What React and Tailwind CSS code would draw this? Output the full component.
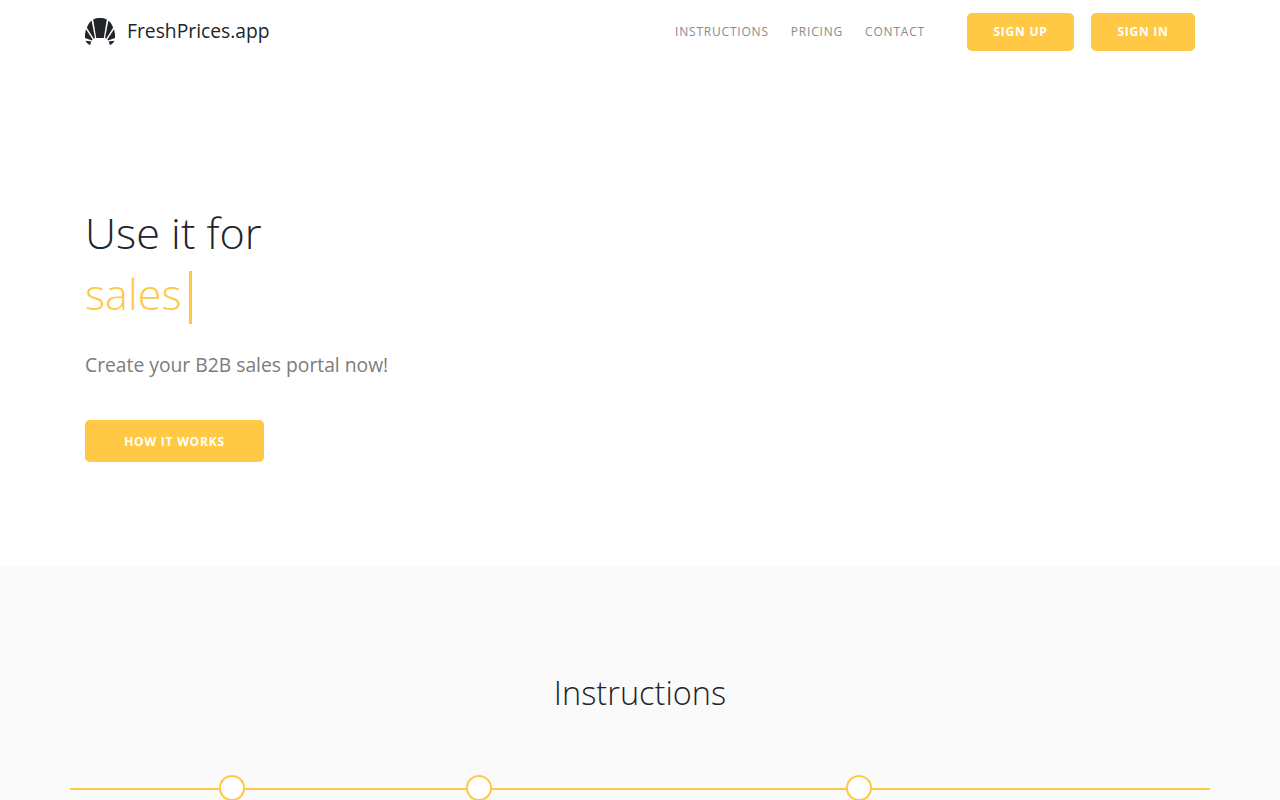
const font = { fontFamily: '"Open Sans", sans-serif' };

function Logo() {
  return (
    <svg width="30" height="27" viewBox="0 0 30 27" className="shrink-0">
      <g fill="#212529">
        <path d="M8.2 1.6 C10.2 .4 12.6 0 15 0 C17.4 0 19.8 .4 21.8 1.6 L18.8 20 L11.2 20 Z" />
        <path d="M6.6 2.4 L10 20 L8.6 20.6 L1.8 9.6 C2.8 6.8 4.4 4.2 6.6 2.4 Z" />
        <path d="M23.4 2.4 L20 20 L21.4 20.6 L28.2 9.6 C27.2 6.8 25.6 4.2 23.4 2.4 Z" />
        <path d="M1 11.2 L7.6 21.6 L7 22.4 L0 20 C-.1 16.8 .2 13.8 1 11.2 Z" />
        <path d="M29 11.2 L22.4 21.6 L23 22.4 L30 20 C30.1 16.8 29.8 13.8 29 11.2 Z" />
        <path d="M.6 22.8 L6.4 23.6 L5 27 C3 26.2 1.4 24.8 .6 22.8 Z" />
        <path d="M29.4 22.8 L23.6 23.6 L25 27 C27 26.2 28.6 24.8 29.4 22.8 Z" />
      </g>
    </svg>
  );
}

function NavButton({ children, width }) {
  return (
    <a className={`flex h-[38px] items-center justify-center rounded-[5px] bg-[#ffc845] text-[12px] font-bold tracking-[0.75px] text-white ${width}`}>
      {children}
    </a>
  );
}

function Dot() {
  return <span className="z-10 box-border block size-[26px] rounded-full border-2 border-[#ffc845] bg-white" />;
}

export default function App() {
  return (
    <div style={font} className="h-[800px] overflow-hidden bg-white text-[#212529] antialiased">
      <header className="flex h-[64px] items-center px-[85px]">
        <a className="-mt-[2px] flex items-center gap-3">
          <Logo />
          <span className="text-[19.3px] leading-none">FreshPrices.app</span>
        </a>
        <nav className="ml-auto flex items-center text-[12px] font-medium tracking-[0.8px] text-[#8a8a8a]">
          <a className="mr-[22px]">INSTRUCTIONS</a>
          <a className="mr-[22px]">PRICING</a>
          <a>CONTACT</a>
        </nav>
        <div className="ml-[42px] flex gap-[17px]">
          <NavButton width="w-[107px]">SIGN UP</NavButton>
          <NavButton width="w-[104px]">SIGN IN</NavButton>
        </div>
      </header>

      <section className="h-[502px] px-[85px] pt-[138px]">
        <h1 className="text-[43.2px] leading-[62px] font-light">Use it for</h1>
        <div className="flex h-[60px] items-center text-[43.2px] leading-[60px] font-light text-[#ffc845]">
          sales
          <span className="mt-[6px] ml-[7px] h-[53px] w-[3px] bg-[#ffc845]" />
        </div>
        <p className="mt-[26px] text-[19.3px] leading-[30px] text-[#7c7c7c]">Create your B2B sales portal now!</p>
        <a className="mt-[40px] flex h-[42px] w-[179px] items-center justify-center rounded-[5px] bg-[#ffc845] pt-[1px] text-[12px] font-bold tracking-[0.8px] text-white">
          HOW IT WORKS
        </a>
      </section>

      <section className="h-[234px] bg-[#fafafa]">
        <h2 className="pt-[102px] text-center text-[32.5px] leading-[50px] font-light">Instructions</h2>
        <div className="relative mx-[70px] mt-[57px] h-[26px]">
          <div className="absolute top-[13px] right-0 left-0 h-[2px] bg-[#ffc845]" />
          <div className="relative ml-[149px] flex">
            <Dot />
            <div className="w-[221px]" />
            <Dot />
            <div className="w-[354px]" />
            <Dot />
          </div>
        </div>
      </section>
    </div>
  );
}
